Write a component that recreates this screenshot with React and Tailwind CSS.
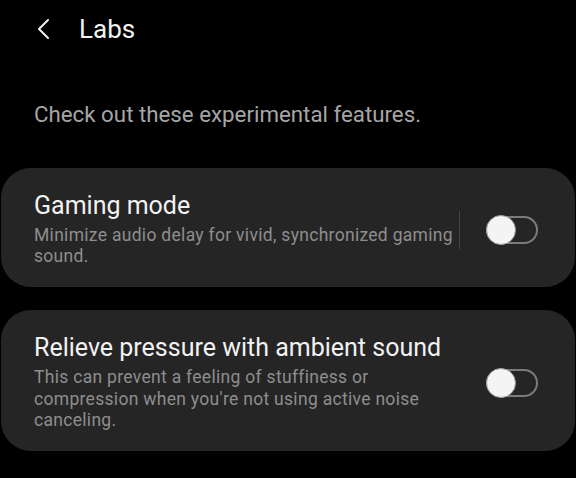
import React, { useState } from "react";

const Toggle = ({ on, onChange }) => {
  return (
    <button
      type="button"
      onClick={() => onChange(!on)}
      className={`relative w-[52px] h-[28px] shrink-0 rounded-full border-2 ${
        on ? "border-[#3e91ff] bg-[#3e91ff]" : "border-[#7b7b7b] bg-transparent"
      }`}
    >
      <span
        className={`absolute top-1/2 -translate-y-1/2 w-[30px] h-[30px] rounded-full bg-[#f4f4f4] border border-[#9a9a9a] ${
          on ? "left-[20px]" : "left-[-2px]"
        }`}
      />
    </button>
  );
};

const LabCard = ({ title, desc, divider, on, onChange }) => {
  return (
    <div className="flex items-center bg-[#252525] rounded-[30px] pl-[33px] pr-[37px] pt-[24px] pb-[20px]">
      <div className="flex-1 min-w-0">
        <p className="text-[25px] leading-[28px] text-[#f2f2f2]">{title}</p>
        <p className="mt-[5px] text-[17.5px] leading-[21.2px] tracking-[0.3px] text-[#8e8e8e]">{desc}</p>
      </div>
      <div className={`w-px h-[38px] ml-[5px] mr-[26px] ${divider ? "bg-[#444444]" : "bg-transparent"}`} />
      <Toggle on={on} onChange={onChange} />
    </div>
  );
};

const App = () => {
  const [gaming, setGaming] = useState(false);
  const [ambient, setAmbient] = useState(false);

  return (
    <div className="min-h-[478px] w-full bg-black font-['Roboto',sans-serif] overflow-hidden">
      {/* Header */}
      <div className="flex items-center h-[58px] pl-[36px]">
        <svg width="16" height="24" viewBox="0 0 16 24" fill="none" className="shrink-0">
          <path d="M12 3 L3 12 L12 21" stroke="#f2f2f2" strokeWidth="2" strokeLinecap="round" strokeLinejoin="round" />
        </svg>
        <h1 className="ml-[27px] text-[26px] text-[#f2f2f2]">Labs</h1>
      </div>

      <p className="pl-[34px] mt-[43px] text-[22.3px] leading-[26px] text-[#a6a6a6]">
        Check out these experimental features.
      </p>

      <div className="flex flex-col gap-[23px] px-[1px] mt-[41px]">
        <LabCard
          title="Gaming mode"
          desc="Minimize audio delay for vivid, synchronized gaming sound."
          divider
          on={gaming}
          onChange={setGaming}
        />
        <LabCard
          title="Relieve pressure with ambient sound"
          desc="This can prevent a feeling of stuffiness or compression when you're not using active noise canceling."
          on={ambient}
          onChange={setAmbient}
        />
      </div>
    </div>
  );
};

export default App;
